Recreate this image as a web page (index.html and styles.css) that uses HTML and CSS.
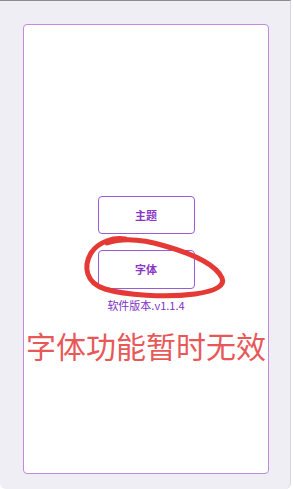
FILE: index.html
```html
<!DOCTYPE html>
<html lang="zh">
<head>
    <meta charset="UTF-8">
    <meta name="viewport" content="width=device-width, initial-scale=1.0">
    <title>设置</title>
    <link rel="stylesheet" href="styles.css">
</head>
<body>
    <div class="frame">
        <div class="card">
            <div class="btnGroup">
                <button class="btn">主题</button>
                <button class="btn">字体</button>
                <svg class="scribble" width="150" height="75" viewBox="0 0 150 75">
                    <path d="M42 4 C32 2 16 6 8 18 C0 32 3 48 22 54 C42 60 82 63 112 59 C134 56 142 50 139 43 C133 30 110 19 82 11 C62 5 42 2 24 8" fill="none" stroke="#e53935" stroke-width="5" stroke-linecap="round"/>
                </svg>
            </div>
            <p class="version">软件版本.v1.1.4</p>
            <p class="notice">字体功能暂时无效</p>
        </div>
    </div>
</body>
</html>
```

FILE: styles.css
```css
*{margin: 0; padding: 0; box-sizing: border-box; font-family: "Noto Sans CJK SC", "Noto Sans", sans-serif;}
body{background-color: #fff; width: 294px; height: 489px; overflow: hidden;}
.frame{width: 291px; height: 489px; background-color: #efeef4; border-top: 1px solid #8c8c8c; border-right: 1px solid #d6d5dc; border-bottom-left-radius: 6px; border-bottom-right-radius: 6px; padding: 23px 0 0 23px;}
.card{width: 246px; height: 450px; background-color: #fff; border: 1.5px solid #bf8ae0; border-radius: 4px; display: flex; flex-direction: column; align-items: center; padding-top: 170.5px;}

.btnGroup{display: flex; flex-direction: column; align-items: center; gap: 16px; position: relative;}
.btn{width: 97px; height: 38px; background-color: #fff; border: 1px solid #9a5cd6; border-radius: 4px; color: #8a35c8; font-size: 11px; font-weight: 700; cursor: pointer;}
.btn:nth-child(2){height: 39px;}
.scribble{position: absolute; left: -15px; top: 39px; overflow: visible; pointer-events: none;}

.version{color: #7e30c4; font-size: 11px; margin-top: 8px; line-height: 16px;}
.notice{color: #e85858; font-size: 30px; line-height: 36px; margin-top: 14px; letter-spacing: 0;}
```
